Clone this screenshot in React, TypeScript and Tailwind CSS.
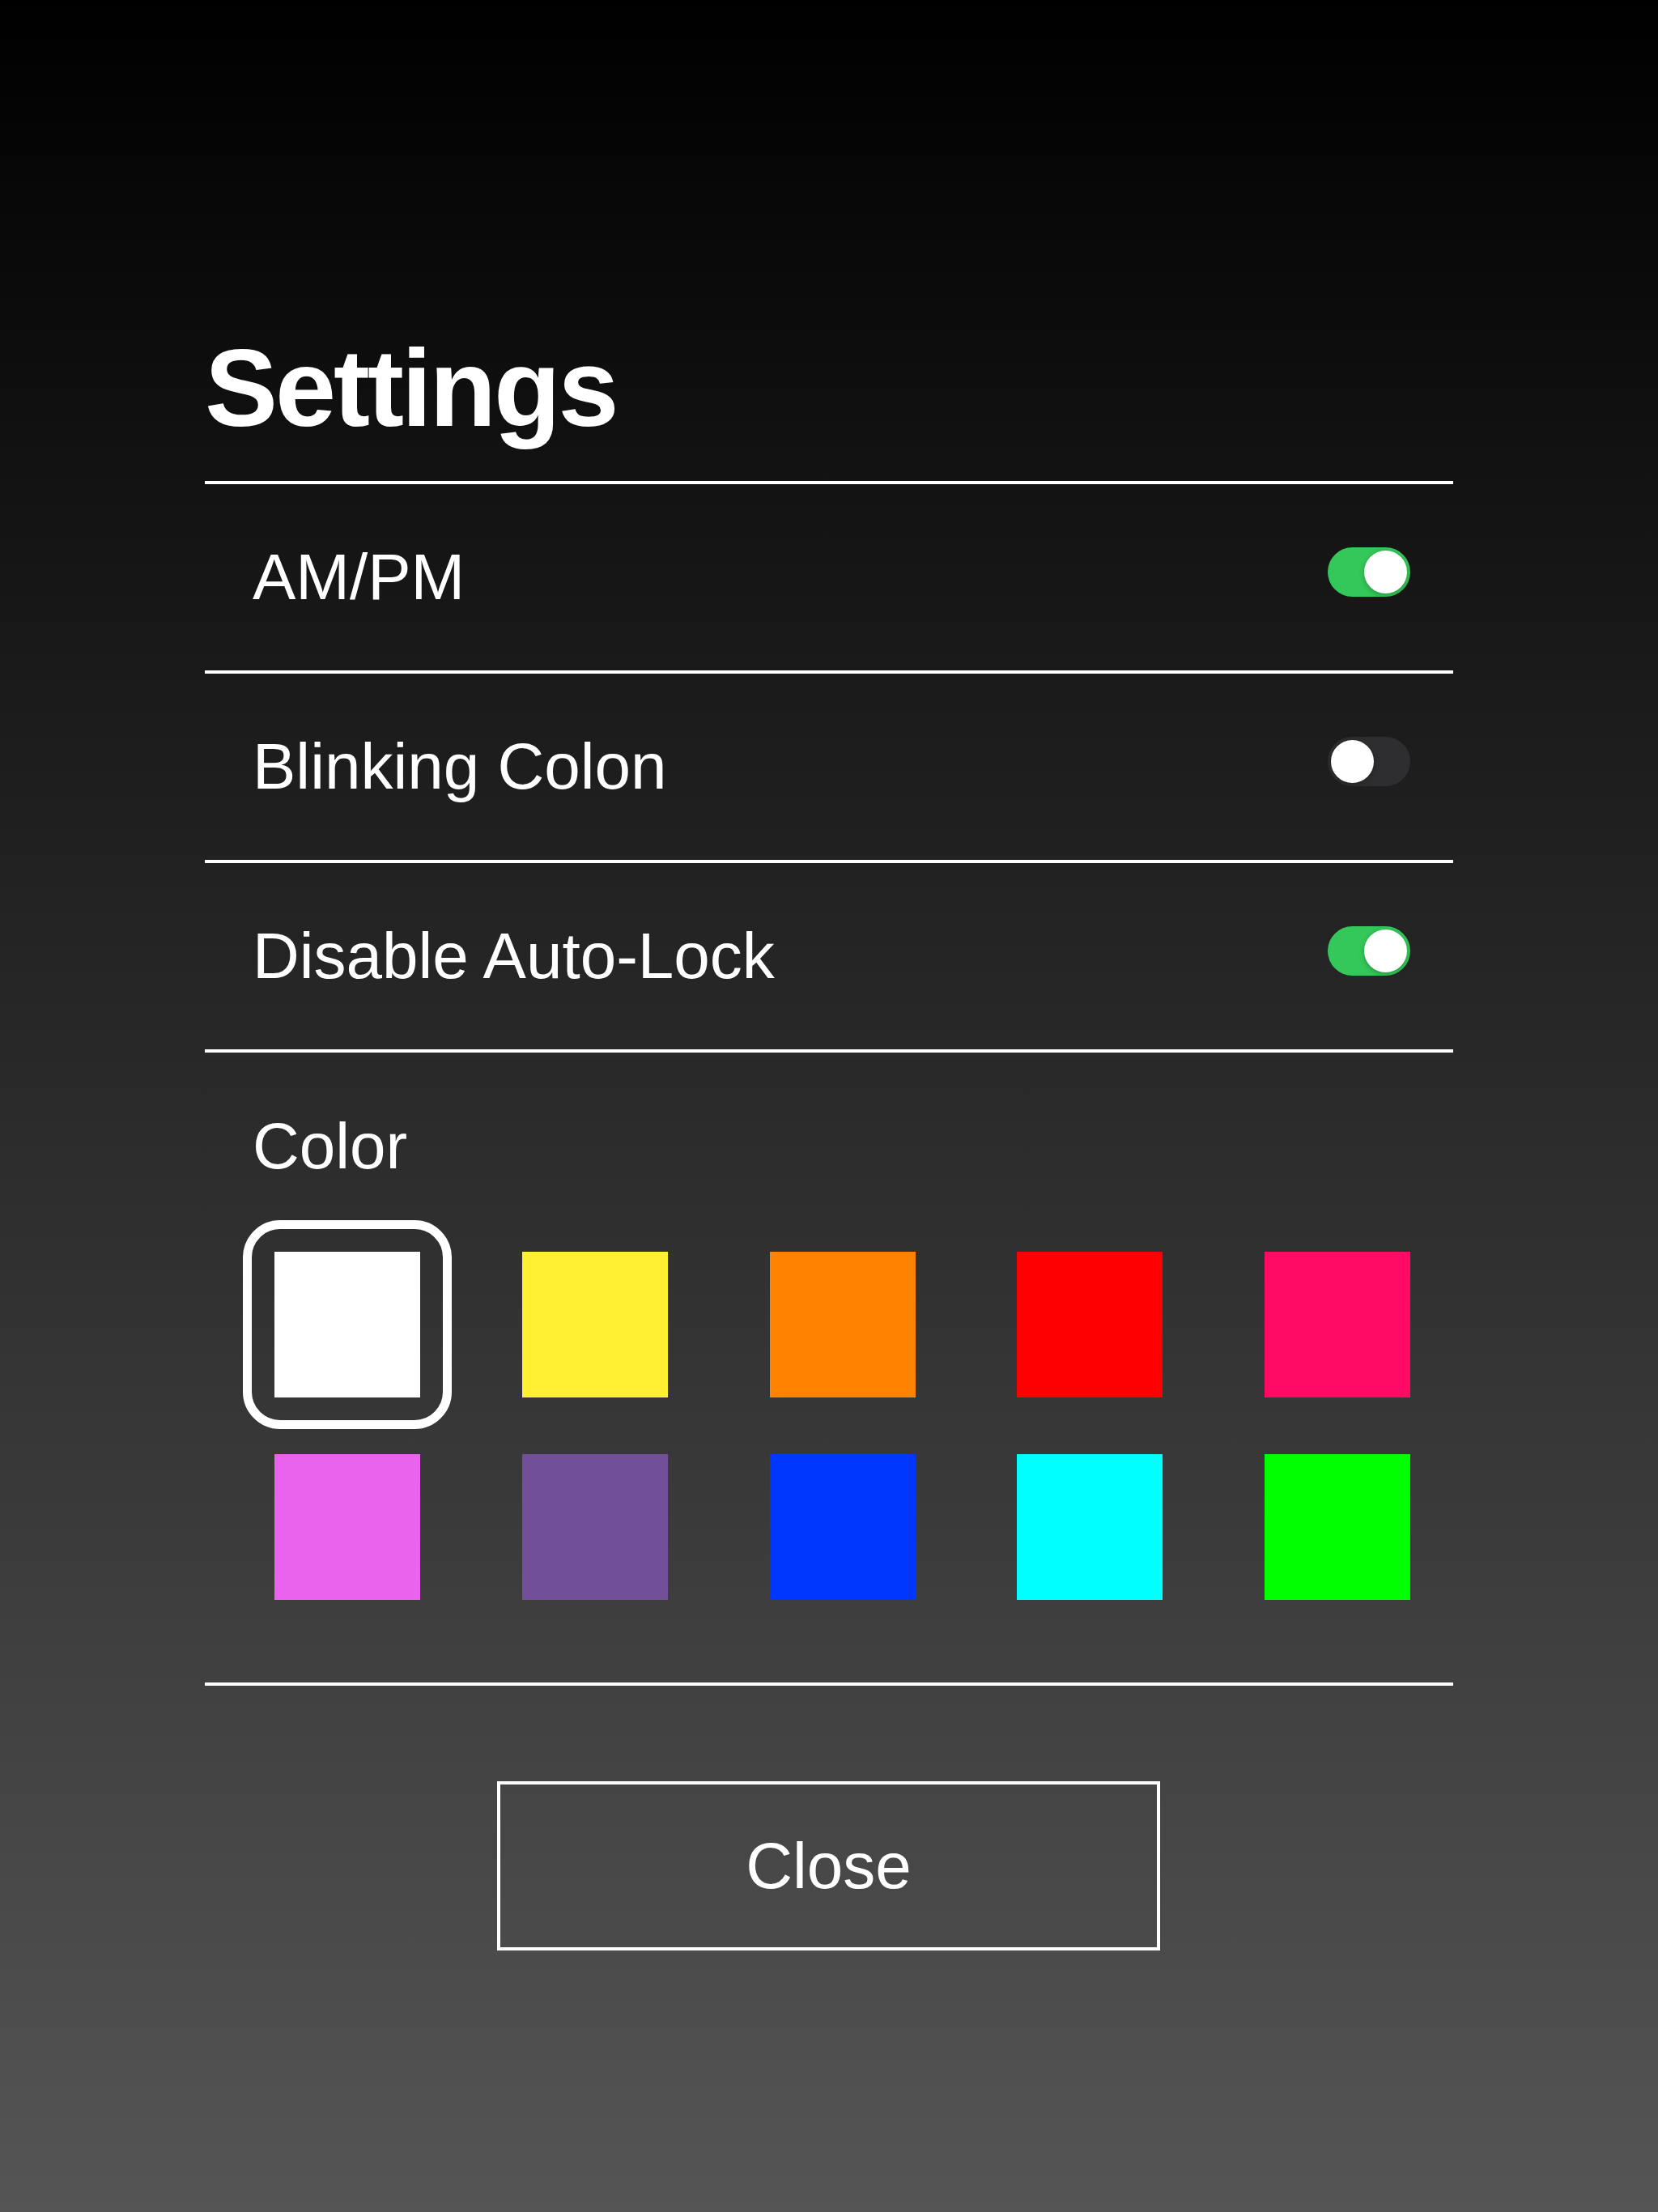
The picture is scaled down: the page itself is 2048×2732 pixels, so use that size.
import { ReactElement } from "react";

interface Swatch {
    name: string;
    cls: string;
}

// 색상 팔레트 (두 줄, 다섯 칸)
const swatchRows: Swatch[][] = [
    [
        { name: "white", cls: "bg-white" },
        { name: "yellow", cls: "bg-[#fff033]" },
        { name: "orange", cls: "bg-[#ff8200]" },
        { name: "red", cls: "bg-[#ff0000]" },
        { name: "pink", cls: "bg-[#ff0b66]" },
    ],
    [
        { name: "magenta", cls: "bg-[#e963ed]" },
        { name: "purple", cls: "bg-[#724f99]" },
        { name: "blue", cls: "bg-[#0037ff]" },
        { name: "cyan", cls: "bg-[#00ffff]" },
        { name: "green", cls: "bg-[#00ff00]" },
    ],
];

function Toggle({ on }: { on: boolean }): ReactElement {
    return (
        <div
            className={`mb-[14px] flex h-[61px] w-[102px] items-center rounded-full px-[4px] ${
                on ? "justify-end bg-[#34c759]" : "justify-start bg-[#2e2e30]"
            }`}
        >
            <div className="h-[53px] w-[53px] rounded-full bg-white shadow-[0_2px_6px_rgba(0,0,0,0.25)]" />
        </div>
    );
}

function Divider(): ReactElement {
    return <div className="h-[4px] w-full bg-white" />;
}

function Row({ label, on }: { label: string; on: boolean }): ReactElement {
    return (
        <div className="flex h-[230px] items-center justify-between pl-[59px] pr-[53px]">
            <span className="text-[80px] leading-none">{label}</span>
            <Toggle on={on} />
        </div>
    );
}

function App(): ReactElement {
    return (
        <div
            className="min-h-[2732px] w-full bg-[linear-gradient(to_bottom,#000000,#555555)] text-white"
            style={{ fontFamily: '"Liberation Sans", Arial, sans-serif' }}
        >
            <div className="ml-[253px] w-[1542px] pt-[412px]">
                {/* 제목 */}
                <h1 className="mb-[47px] text-[135px] font-bold leading-none tracking-[-3px]">Settings</h1>
                <Divider />
                <Row label="AM/PM" on={true} />
                <Divider />
                <Row label="Blinking Colon" on={false} />
                <Divider />
                <Row label="Disable Auto-Lock" on={true} />
                <Divider />

                {/* 색상 선택 */}
                <div className="pl-[59px] pt-[76px] text-[80px] leading-none">Color</div>
                <div className="mt-[90px] flex flex-col gap-[70px] pl-[86px] pr-[53px]">
                    {swatchRows.map((row, r) => (
                        <div key={r} className="flex justify-between">
                            {row.map((s, i) => (
                                <div key={s.name} className="relative h-[180px] w-[180px]">
                                    {r === 0 && i === 0 && (
                                        <div className="absolute -inset-[39px] rounded-[46px] border-[11px] border-white" />
                                    )}
                                    <div className={`h-full w-full ${s.cls}`} />
                                </div>
                            ))}
                        </div>
                    ))}
                </div>
                <div className="mt-[102px]">
                    <Divider />
                </div>

                {/* 닫기 버튼 */}
                <div className="flex justify-center pt-[118px]">
                    <button className="-ml-[1px] flex h-[209px] w-[819px] items-center justify-center border-[4px] border-white text-[80px] leading-none">
                        Close
                    </button>
                </div>
            </div>
        </div>
    );
}

export default App;
